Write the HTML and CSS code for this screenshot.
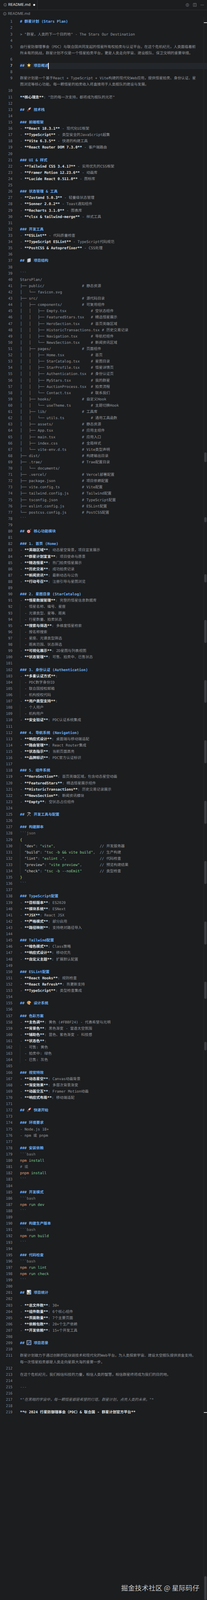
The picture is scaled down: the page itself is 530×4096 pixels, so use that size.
FILE: index.html
```html
<!DOCTYPE html>
<html lang="zh">
<head>
<meta charset="utf-8">
<title>README.md</title>
<link rel="stylesheet" href="styles.css">
</head>
<body>
<div class="window">
<header class="tabs">
  <div class="tab">
    <svg class="info" viewBox="0 0 12 12"><circle cx="6" cy="6" r="5"/><path d="M6 5.2v3.6M6 3.2v1"/></svg>
    <span class="tab-name">README.md</span>
    <span class="dirty"></span>
  </div>
  <div class="actions">
    <svg class="action" viewBox="0 0 14 14"><circle cx="7" cy="7" r="5.4"/><circle class="fill" cx="7" cy="7" r="1.5"/><path d="M7 0.6v2M7 11.4v2"/></svg>
    <svg class="action" viewBox="0 0 14 14"><rect x="1.5" y="1" width="11" height="12"/><path d="M7 1v12"/></svg>
    <svg class="action" viewBox="0 0 14 14"><circle class="fill" cx="2.5" cy="7" r="1.1"/><circle class="fill" cx="7" cy="7" r="1.1"/><circle class="fill" cx="11.5" cy="7" r="1.1"/></svg>
  </div>
</header>
<nav class="crumb">
  <svg class="info" viewBox="0 0 12 12"><circle cx="6" cy="6" r="5"/><path d="M6 5.2v3.6M6 3.2v1"/></svg>
  <span>README.md</span>
</nav>
<main class="editor">
<div class="row"><span class="num">1</span><span class="code h"># 群星计划 (Stars Plan)</span></div>
<div class="row"><span class="num">2</span><span class="code"></span></div>
<div class="row"><span class="num">3</span><span class="code">&gt; "群星，人类的下一个目的地" - The Stars Our Destination</span></div>
<div class="row"><span class="num">4</span><span class="code"></span></div>
<div class="row"><span class="num">5</span><span class="code">由行星防御理事会（PDC）与联合国共同发起的恒星所有权拍卖与认证平台。在这个危机纪元，人类面临着前<br>所未有的挑战，群星计划不仅是一个恒星拍卖平台，更是人类走向宇宙、建设舰队、保卫文明的重要举措。</span></div>
<div class="row"><span class="num">6</span><span class="code"></span></div>
<div class="row active"><span class="num">7</span><span class="code h">## <svg class="emoji" viewBox="0 0 16 16"><path d="M8 .5l1.9 4.6 5 .4-3.8 3.2 1.2 4.9L8 11l-4.3 2.6 1.2-4.9L1.1 5.5l5-.4z" fill="#f5c33b"/><path d="M8 3l1 3.2 3 .2-2.4 1.9.8 3L8 9.7l-2.4 1.6.8-3L4 6.4l3-.2z" fill="#fde68a"/><path d="M6 13.5l2 2 2-2z" fill="#e8912c"/></svg> 项目概述<span class="caret"></span></span></div>
<div class="row"><span class="num">8</span><span class="code"></span></div>
<div class="row"><span class="num">9</span><span class="code">群星计划是一个基于React + TypeScript + Vite构建的现代化Web应用，提供恒星拍卖、身份认证、星<br>图浏览等核心功能。每一颗恒星的拍卖收入将直接用于人类舰队的建设与发展。</span></div>
<div class="row"><span class="num">10</span><span class="code"></span></div>
<div class="row"><span class="num">11</span><span class="code"><b>**核心理念**</b>: "您的每一次支持，都将成为舰队的光芒"</span></div>
<div class="row"><span class="num">12</span><span class="code"></span></div>
<div class="row"><span class="num">13</span><span class="code h">## <svg class="emoji" viewBox="0 0 16 16"><path d="M15 1c-4 .3-7 2.300-9 6.500l2.500 2.500C12.700 8 14.700 5 15 1z" fill="#dfe3ea"/><path d="M15 1c-1.600.1-3 .5-4.300 1.200l3.100 3.100C14.500 4 14.900 2.600 15 1z" fill="#d8403a"/><path d="M6 7.500L2.500 8 1.500 10l3-.4zM8.500 10l-.5 3.500-2 1 .4-3z" fill="#c23a35"/><path d="M4.500 10.500L1 15l4.500-3.500z" fill="#f0b429"/><path d="M3.500 11.500L2.400 13.600l2.100-1.100z" fill="#e0561f"/><circle cx="10.500" cy="5.500" r="1.300" fill="#5b8fc9"/></svg> 技术栈</span></div>
<div class="row"><span class="num">14</span><span class="code"></span></div>
<div class="row"><span class="num">15</span><span class="code h">### 前端框架</span></div>
<div class="row"><span class="num">16</span><span class="code"><span class="dash">-</span> <b>**React 18.3.1**</b> - 现代化UI框架</span></div>
<div class="row"><span class="num">17</span><span class="code"><span class="dash">-</span> <b>**TypeScript**</b> - 类型安全的JavaScript超集</span></div>
<div class="row"><span class="num">18</span><span class="code"><span class="dash">-</span> <b>**Vite 6.3.5**</b> - 快速的构建工具</span></div>
<div class="row"><span class="num">19</span><span class="code"><span class="dash">-</span> <b>**React Router DOM 7.3.0**</b> - 客户端路由</span></div>
<div class="row"><span class="num">20</span><span class="code"></span></div>
<div class="row"><span class="num">21</span><span class="code h">### UI &amp; 样式</span></div>
<div class="row"><span class="num">22</span><span class="code"><span class="dash">-</span> <b>**Tailwind CSS 3.4.17**</b> - 实用优先的CSS框架</span></div>
<div class="row"><span class="num">23</span><span class="code"><span class="dash">-</span> <b>**Framer Motion 12.23.6**</b> - 动画库</span></div>
<div class="row"><span class="num">24</span><span class="code"><span class="dash">-</span> <b>**Lucide React 0.511.0**</b> - 图标库</span></div>
<div class="row"><span class="num">25</span><span class="code"></span></div>
<div class="row"><span class="num">26</span><span class="code h">### 状态管理 &amp; 工具</span></div>
<div class="row"><span class="num">27</span><span class="code"><span class="dash">-</span> <b>**Zustand 5.0.3**</b> - 轻量级状态管理</span></div>
<div class="row"><span class="num">28</span><span class="code"><span class="dash">-</span> <b>**Sonner 2.0.2**</b> - Toast通知组件</span></div>
<div class="row"><span class="num">29</span><span class="code"><span class="dash">-</span> <b>**Recharts 3.1.0**</b> - 图表库</span></div>
<div class="row"><span class="num">30</span><span class="code"><span class="dash">-</span> <b>**clsx &amp; tailwind-merge**</b> - 样式工具</span></div>
<div class="row"><span class="num">31</span><span class="code"></span></div>
<div class="row"><span class="num">32</span><span class="code h">### 开发工具</span></div>
<div class="row"><span class="num">33</span><span class="code"><span class="dash">-</span> <b>**ESLint**</b> - 代码质量检查</span></div>
<div class="row"><span class="num">34</span><span class="code"><span class="dash">-</span> <b>**TypeScript ESLint**</b> - TypeScript代码规范</span></div>
<div class="row"><span class="num">35</span><span class="code"><span class="dash">-</span> <b>**PostCSS &amp; Autoprefixer**</b> - CSS处理</span></div>
<div class="row"><span class="num">36</span><span class="code"></span></div>
<div class="row"><span class="num">37</span><span class="code h">## <svg class="emoji" viewBox="0 0 16 16"><path d="M2 4.500l5-2.500 7-1v12l-5 2-7 .5z" fill="#8f949b"/><path d="M4 3.500l9.500-1.300V12.500L4 14z" fill="#c9ccd1"/></svg> 项目结构</span></div>
<div class="row"><span class="num">38</span><span class="code"></span></div>
<div class="row"><span class="num">39</span><span class="code fence">```</span></div>
<div class="row"><span class="num">40</span><span class="code">StarsPlan/</span></div>
<div class="row"><span class="num">41</span><span class="code">├── public/                 # 静态资源</span></div>
<div class="row"><span class="num">42</span><span class="code">│   └── favicon.svg</span></div>
<div class="row"><span class="num">43</span><span class="code">├── src/                    # 源代码目录</span></div>
<div class="row"><span class="num">44</span><span class="code">│   ├── components/         # 可复用组件</span></div>
<div class="row"><span class="num">45</span><span class="code">│   │   ├── Empty.tsx           # 空状态组件</span></div>
<div class="row"><span class="num">46</span><span class="code">│   │   ├── FeaturedStars.tsx   # 精选恒星展示</span></div>
<div class="row"><span class="num">47</span><span class="code">│   │   ├── HeroSection.tsx     # 首页英雄区域</span></div>
<div class="row"><span class="num">48</span><span class="code">│   │   ├── HistoricTransactions.tsx # 历史交易记录</span></div>
<div class="row"><span class="num">49</span><span class="code">│   │   ├── Navigation.tsx      # 导航栏组件</span></div>
<div class="row"><span class="num">50</span><span class="code">│   │   └── NewsSection.tsx     # 新闻资讯区域</span></div>
<div class="row"><span class="num">51</span><span class="code">│   ├── pages/              # 页面组件</span></div>
<div class="row"><span class="num">52</span><span class="code">│   │   ├── Home.tsx            # 首页</span></div>
<div class="row"><span class="num">53</span><span class="code">│   │   ├── StarCatalog.tsx     # 星图目录</span></div>
<div class="row"><span class="num">54</span><span class="code">│   │   ├── StarProfile.tsx     # 恒星详情页</span></div>
<div class="row"><span class="num">55</span><span class="code">│   │   ├── Authentication.tsx  # 身份认证页</span></div>
<div class="row"><span class="num">56</span><span class="code">│   │   ├── MyStars.tsx         # 我的群星</span></div>
<div class="row"><span class="num">57</span><span class="code">│   │   ├── AuctionProcess.tsx  # 拍卖流程</span></div>
<div class="row"><span class="num">58</span><span class="code">│   │   └── Contact.tsx         # 联系我们</span></div>
<div class="row"><span class="num">59</span><span class="code">│   ├── hooks/              # 自定义Hook</span></div>
<div class="row"><span class="num">60</span><span class="code">│   │   └── useTheme.ts         # 主题切换Hook</span></div>
<div class="row"><span class="num">61</span><span class="code">│   ├── lib/                # 工具库</span></div>
<div class="row"><span class="num">62</span><span class="code">│   │   └── utils.ts            # 通用工具函数</span></div>
<div class="row"><span class="num">63</span><span class="code">│   ├── assets/             # 静态资源</span></div>
<div class="row"><span class="num">64</span><span class="code">│   ├── App.tsx             # 应用主组件</span></div>
<div class="row"><span class="num">65</span><span class="code">│   ├── main.tsx            # 应用入口</span></div>
<div class="row"><span class="num">66</span><span class="code">│   ├── index.css           # 全局样式</span></div>
<div class="row"><span class="num">67</span><span class="code">│   └── vite-env.d.ts       # Vite类型声明</span></div>
<div class="row"><span class="num">68</span><span class="code">├── dist/                   # 构建输出目录</span></div>
<div class="row"><span class="num">69</span><span class="code">├── .trae/                  # Trae配置目录</span></div>
<div class="row"><span class="num">70</span><span class="code">│   └── documents/</span></div>
<div class="row"><span class="num">71</span><span class="code">├── .vercel/                # Vercel部署配置</span></div>
<div class="row"><span class="num">72</span><span class="code">├── package.json            # 项目依赖配置</span></div>
<div class="row"><span class="num">73</span><span class="code">├── vite.config.ts          # Vite配置</span></div>
<div class="row"><span class="num">74</span><span class="code">├── tailwind.config.js      # Tailwind配置</span></div>
<div class="row"><span class="num">75</span><span class="code">├── tsconfig.json           # TypeScript配置</span></div>
<div class="row"><span class="num">76</span><span class="code">├── eslint.config.js        # ESLint配置</span></div>
<div class="row"><span class="num">77</span><span class="code">└── postcss.config.js       # PostCSS配置</span></div>
<div class="row"><span class="num">78</span><span class="code fence">```</span></div>
<div class="row"><span class="num">79</span><span class="code"></span></div>
<div class="row"><span class="num">80</span><span class="code h">## <svg class="emoji" viewBox="0 0 16 16"><circle cx="7" cy="9.500" r="6" fill="#d8383a"/><circle cx="7" cy="9.500" r="4.200" fill="#f3ece6"/><circle cx="7" cy="9.500" r="2.700" fill="#d8383a"/><circle cx="7" cy="9.500" r="1.100" fill="#f3ece6"/><path d="M7 9.500L14 2.500" stroke="#7fa88c" stroke-width="1.200"/><path d="M12.500 2.500L15 .8l-.4 2.700-1.300.7z" fill="#6a9a7a"/></svg> 核心功能模块</span></div>
<div class="row"><span class="num">81</span><span class="code"></span></div>
<div class="row"><span class="num">82</span><span class="code h">### 1. 首页 (Home)</span></div>
<div class="row"><span class="num">83</span><span class="code"><span class="dash">-</span> <b>**英雄区域**</b>: 动态星空背景，项目宣言展示</span></div>
<div class="row"><span class="num">84</span><span class="code"><span class="dash">-</span> <b>**群星计划宣言**</b>: 项目使命与愿景</span></div>
<div class="row"><span class="num">85</span><span class="code"><span class="dash">-</span> <b>**精选恒星**</b>: 热门拍卖恒星展示</span></div>
<div class="row"><span class="num">86</span><span class="code"><span class="dash">-</span> <b>**历史交易**</b>: 成功拍卖记录</span></div>
<div class="row"><span class="num">87</span><span class="code"><span class="dash">-</span> <b>**新闻资讯**</b>: 最新动态与公告</span></div>
<div class="row"><span class="num">88</span><span class="code"><span class="dash">-</span> <b>**行动号召**</b>: 注册引导与星图浏览</span></div>
<div class="row"><span class="num">89</span><span class="code"></span></div>
<div class="row"><span class="num">90</span><span class="code h">### 2. 星图目录 (StarCatalog)</span></div>
<div class="row"><span class="num">91</span><span class="code"><span class="dash">-</span> <b>**恒星数据管理**</b>: 完整的恒星信息数据库</span></div>
<div class="row"><span class="num">92</span><span class="code guide">  <span class="dash">-</span> 恒星名称、编号、星座</span></div>
<div class="row"><span class="num">93</span><span class="code guide">  <span class="dash">-</span> 光谱类型、星等、距离</span></div>
<div class="row"><span class="num">94</span><span class="code guide">  <span class="dash">-</span> 行星数量、拍卖状态</span></div>
<div class="row"><span class="num">95</span><span class="code"><span class="dash">-</span> <b>**搜索与筛选**</b>: 多维度恒星检索</span></div>
<div class="row"><span class="num">96</span><span class="code guide">  <span class="dash">-</span> 按名称搜索</span></div>
<div class="row"><span class="num">97</span><span class="code guide">  <span class="dash">-</span> 星座、光谱类型筛选</span></div>
<div class="row"><span class="num">98</span><span class="code guide">  <span class="dash">-</span> 距离范围、状态筛选</span></div>
<div class="row"><span class="num">99</span><span class="code"><span class="dash">-</span> <b>**可视化展示**</b>: 2D星图与列表视图</span></div>
<div class="row"><span class="num">100</span><span class="code"><span class="dash">-</span> <b>**状态管理**</b>: 可售、拍卖中、已售状态</span></div>
<div class="row"><span class="num">101</span><span class="code"></span></div>
<div class="row"><span class="num">102</span><span class="code h">### 3. 身份认证 (Authentication)</span></div>
<div class="row"><span class="num">103</span><span class="code"><span class="dash">-</span> <b>**多重认证方式**</b>:</span></div>
<div class="row"><span class="num">104</span><span class="code guide">  <span class="dash">-</span> PDC数字身份ID</span></div>
<div class="row"><span class="num">105</span><span class="code guide">  <span class="dash">-</span> 联合国授权邮箱</span></div>
<div class="row"><span class="num">106</span><span class="code guide">  <span class="dash">-</span> 机构授权代码</span></div>
<div class="row"><span class="num">107</span><span class="code"><span class="dash">-</span> <b>**用户类型支持**</b>:</span></div>
<div class="row"><span class="num">108</span><span class="code guide">  <span class="dash">-</span> 个人用户</span></div>
<div class="row"><span class="num">109</span><span class="code guide">  <span class="dash">-</span> 机构用户</span></div>
<div class="row"><span class="num">110</span><span class="code"><span class="dash">-</span> <b>**安全验证**</b>: PDC认证系统集成</span></div>
<div class="row"><span class="num">111</span><span class="code"></span></div>
<div class="row"><span class="num">112</span><span class="code h">### 4. 导航系统 (Navigation)</span></div>
<div class="row"><span class="num">113</span><span class="code"><span class="dash">-</span> <b>**响应式设计**</b>: 桌面端与移动端适配</span></div>
<div class="row"><span class="num">114</span><span class="code"><span class="dash">-</span> <b>**路由管理**</b>: React Router集成</span></div>
<div class="row"><span class="num">115</span><span class="code"><span class="dash">-</span> <b>**状态指示**</b>: 当前页面高亮</span></div>
<div class="row"><span class="num">116</span><span class="code"><span class="dash">-</span> <b>**品牌标识**</b>: PDC官方认证标识</span></div>
<div class="row"><span class="num">117</span><span class="code"></span></div>
<div class="row"><span class="num">118</span><span class="code h">### 5. 组件系统</span></div>
<div class="row"><span class="num">119</span><span class="code"><span class="dash">-</span> <b>**HeroSection**</b>: 首页英雄区域，包含动态星空动画</span></div>
<div class="row"><span class="num">120</span><span class="code"><span class="dash">-</span> <b>**FeaturedStars**</b>: 精选恒星展示组件</span></div>
<div class="row"><span class="num">121</span><span class="code"><span class="dash">-</span> <b>**HistoricTransactions**</b>: 历史交易记录展示</span></div>
<div class="row"><span class="num">122</span><span class="code"><span class="dash">-</span> <b>**NewsSection**</b>: 新闻资讯模块</span></div>
<div class="row"><span class="num">123</span><span class="code"><span class="dash">-</span> <b>**Empty**</b>: 空状态占位组件</span></div>
<div class="row"><span class="num">124</span><span class="code"></span></div>
<div class="row"><span class="num">125</span><span class="code h">## <svg class="emoji" viewBox="0 0 16 16"><path d="M11.500 3L2.500 15" stroke="#9a9da3" stroke-width="1.600"/><path d="M4.500 3L13.500 15" stroke="#8a6f4e" stroke-width="1.600"/><path d="M1.500 4.500C4 1.500 8 1 11 2.500L9.500 4C7 3 4 3.500 1.500 4.500z" fill="#b9bcc2"/><path d="M9.500 1.500l5 3-1.500 2.500-5-3z" fill="#aeb1b7"/></svg> 开发工具与配置</span></div>
<div class="row"><span class="num">126</span><span class="code"></span></div>
<div class="row"><span class="num">127</span><span class="code h">### 构建脚本</span></div>
<div class="row"><span class="num">128</span><span class="code fence">```json</span></div>
<div class="row"><span class="num">129</span><span class="code"><span class="brace">{</span></span></div>
<div class="row"><span class="num">130</span><span class="code guide">  <span class="key">"dev"</span>: <span class="str">"vite"</span>,                    // 开发服务器</span></div>
<div class="row"><span class="num">131</span><span class="code guide">  <span class="key">"build"</span>: <span class="str">"tsc -b &amp;&amp; vite build"</span>,  // 生产构建</span></div>
<div class="row"><span class="num">132</span><span class="code guide">  <span class="key">"lint"</span>: <span class="str">"eslint ."</span>,               // 代码检查</span></div>
<div class="row"><span class="num">133</span><span class="code guide">  <span class="key">"preview"</span>: <span class="str">"vite preview"</span>,        // 预览构建结果</span></div>
<div class="row"><span class="num">134</span><span class="code guide">  <span class="key">"check"</span>: <span class="str">"tsc -b --noEmit"</span>        // 类型检查</span></div>
<div class="row"><span class="num">135</span><span class="code"><span class="brace">}</span></span></div>
<div class="row"><span class="num">136</span><span class="code fence">```</span></div>
<div class="row"><span class="num">137</span><span class="code"></span></div>
<div class="row"><span class="num">138</span><span class="code h">### TypeScript配置</span></div>
<div class="row"><span class="num">139</span><span class="code"><span class="dash">-</span> <b>**目标版本**</b>: ES2020</span></div>
<div class="row"><span class="num">140</span><span class="code"><span class="dash">-</span> <b>**模块系统**</b>: ESNext</span></div>
<div class="row"><span class="num">141</span><span class="code"><span class="dash">-</span> <b>**JSX**</b>: React JSX</span></div>
<div class="row"><span class="num">142</span><span class="code"><span class="dash">-</span> <b>**严格模式**</b>: 部分启用</span></div>
<div class="row"><span class="num">143</span><span class="code"><span class="dash">-</span> <b>**路径映射**</b>: 支持绝对路径导入</span></div>
<div class="row"><span class="num">144</span><span class="code"></span></div>
<div class="row"><span class="num">145</span><span class="code h">### Tailwind配置</span></div>
<div class="row"><span class="num">146</span><span class="code"><span class="dash">-</span> <b>**暗色模式**</b>: Class策略</span></div>
<div class="row"><span class="num">147</span><span class="code"><span class="dash">-</span> <b>**响应式设计**</b>: 移动优先</span></div>
<div class="row"><span class="num">148</span><span class="code"><span class="dash">-</span> <b>**自定义主题**</b>: 扩展默认配置</span></div>
<div class="row"><span class="num">149</span><span class="code"></span></div>
<div class="row"><span class="num">150</span><span class="code h">### ESLint配置</span></div>
<div class="row"><span class="num">151</span><span class="code"><span class="dash">-</span> <b>**React Hooks**</b>: 规则检查</span></div>
<div class="row"><span class="num">152</span><span class="code"><span class="dash">-</span> <b>**React Refresh**</b>: 热更新支持</span></div>
<div class="row"><span class="num">153</span><span class="code"><span class="dash">-</span> <b>**TypeScript**</b>: 类型检查集成</span></div>
<div class="row"><span class="num">154</span><span class="code"></span></div>
<div class="row"><span class="num">155</span><span class="code h">## <svg class="emoji" viewBox="0 0 16 16"><path d="M8 1.500C3.500 1.500 1 4.500 1.500 8c.5 3 3.500 6.500 8 6.500 2.500 0 3-2 2-3.500-.8-1.300.4-2.500 2-2.300 1.500.1 1.800-1.500 1-3C13.500 3.300 11 1.500 8 1.500z" fill="#e0a458"/><circle cx="5" cy="5" r="1.300" fill="#d8403a"/><circle cx="9" cy="4" r="1.300" fill="#f0d040"/><circle cx="4" cy="9" r="1.300" fill="#4f9a55"/><circle cx="7" cy="12" r="1.300" fill="#4f80c9"/></svg> 设计系统</span></div>
<div class="row"><span class="num">156</span><span class="code"></span></div>
<div class="row"><span class="num">157</span><span class="code h">### 色彩方案</span></div>
<div class="row"><span class="num">158</span><span class="code"><span class="dash">-</span> <b>**主色调**</b>: 黄色 (#FBBF24) - 代表希望与光明</span></div>
<div class="row"><span class="num">159</span><span class="code"><span class="dash">-</span> <b>**背景色**</b>: 黑色渐变 - 营造太空氛围</span></div>
<div class="row"><span class="num">160</span><span class="code"><span class="dash">-</span> <b>**辅助色**</b>: 蓝色、紫色渐变 - 科技感</span></div>
<div class="row"><span class="num">161</span><span class="code"><span class="dash">-</span> <b>**状态色**</b>:</span></div>
<div class="row"><span class="num">162</span><span class="code guide">  <span class="dash">-</span> 可售: 黄色</span></div>
<div class="row"><span class="num">163</span><span class="code guide">  <span class="dash">-</span> 拍卖中: 绿色</span></div>
<div class="row"><span class="num">164</span><span class="code guide">  <span class="dash">-</span> 已售: 灰色</span></div>
<div class="row"><span class="num">165</span><span class="code"></span></div>
<div class="row"><span class="num">166</span><span class="code h">### 视觉特效</span></div>
<div class="row"><span class="num">167</span><span class="code"><span class="dash">-</span> <b>**动态星空**</b>: Canvas动画背景</span></div>
<div class="row"><span class="num">168</span><span class="code"><span class="dash">-</span> <b>**渐变效果**</b>: 多层次背景渐变</span></div>
<div class="row"><span class="num">169</span><span class="code"><span class="dash">-</span> <b>**动画交互**</b>: Framer Motion动画</span></div>
<div class="row"><span class="num">170</span><span class="code"><span class="dash">-</span> <b>**响应式布局**</b>: 移动端适配</span></div>
<div class="row"><span class="num">171</span><span class="code"></span></div>
<div class="row"><span class="num">172</span><span class="code h">## <svg class="emoji" viewBox="0 0 16 16"><path d="M15 1c-4 .3-7 2.300-9 6.500l2.500 2.500C12.700 8 14.700 5 15 1z" fill="#dfe3ea"/><path d="M15 1c-1.600.1-3 .5-4.300 1.200l3.100 3.100C14.500 4 14.900 2.600 15 1z" fill="#d8403a"/><path d="M6 7.500L2.500 8 1.500 10l3-.4zM8.500 10l-.5 3.500-2 1 .4-3z" fill="#c23a35"/><path d="M4.500 10.500L1 15l4.500-3.500z" fill="#f0b429"/><path d="M3.500 11.500L2.400 13.600l2.100-1.100z" fill="#e0561f"/><circle cx="10.500" cy="5.500" r="1.300" fill="#5b8fc9"/></svg> 快速开始</span></div>
<div class="row"><span class="num">173</span><span class="code"></span></div>
<div class="row"><span class="num">174</span><span class="code h">### 环境要求</span></div>
<div class="row"><span class="num">175</span><span class="code"><span class="dash">-</span> Node.js 18+</span></div>
<div class="row"><span class="num">176</span><span class="code"><span class="dash">-</span> npm 或 pnpm</span></div>
<div class="row"><span class="num">177</span><span class="code"></span></div>
<div class="row"><span class="num">178</span><span class="code h">### 安装依赖</span></div>
<div class="row"><span class="num">179</span><span class="code fence">```bash</span></div>
<div class="row"><span class="num">180</span><span class="code"><span class="cmd">npm</span> <span class="str">install</span></span></div>
<div class="row"><span class="num">181</span><span class="code fence"># 或</span></div>
<div class="row"><span class="num">182</span><span class="code"><span class="cmd">pnpm</span> <span class="str">install</span></span></div>
<div class="row"><span class="num">183</span><span class="code fence">```</span></div>
<div class="row"><span class="num">184</span><span class="code"></span></div>
<div class="row"><span class="num">185</span><span class="code h">### 开发模式</span></div>
<div class="row"><span class="num">186</span><span class="code fence">```bash</span></div>
<div class="row"><span class="num">187</span><span class="code"><span class="cmd">npm</span> <span class="str">run dev</span></span></div>
<div class="row"><span class="num">188</span><span class="code fence">```</span></div>
<div class="row"><span class="num">189</span><span class="code"></span></div>
<div class="row"><span class="num">190</span><span class="code h">### 构建生产版本</span></div>
<div class="row"><span class="num">191</span><span class="code fence">```bash</span></div>
<div class="row"><span class="num">192</span><span class="code"><span class="cmd">npm</span> <span class="str">run build</span></span></div>
<div class="row"><span class="num">193</span><span class="code fence">```</span></div>
<div class="row"><span class="num">194</span><span class="code"></span></div>
<div class="row"><span class="num">195</span><span class="code h">### 代码检查</span></div>
<div class="row"><span class="num">196</span><span class="code fence">```bash</span></div>
<div class="row"><span class="num">197</span><span class="code"><span class="cmd">npm</span> <span class="str">run lint</span></span></div>
<div class="row"><span class="num">198</span><span class="code"><span class="cmd">npm</span> <span class="str">run check</span></span></div>
<div class="row"><span class="num">199</span><span class="code fence">```</span></div>
<div class="row"><span class="num">200</span><span class="code"></span></div>
<div class="row"><span class="num">201</span><span class="code h">## <svg class="emoji" viewBox="0 0 16 16"><rect x="1" y="0.500" width="14" height="15" fill="#eef0f2"/><rect x="3" y="7" width="2.600" height="8" fill="#3fa34d"/><rect x="6.700" y="10" width="2.600" height="5" fill="#d8352f"/><rect x="10.400" y="3" width="2.600" height="12" fill="#2f6fc4"/></svg> 项目统计</span></div>
<div class="row"><span class="num">202</span><span class="code"></span></div>
<div class="row"><span class="num">203</span><span class="code"><span class="dash">-</span> <b>**总文件数**</b>: 30+</span></div>
<div class="row"><span class="num">204</span><span class="code"><span class="dash">-</span> <b>**组件数量**</b>: 6个核心组件</span></div>
<div class="row"><span class="num">205</span><span class="code"><span class="dash">-</span> <b>**页面数量**</b>: 7个主要页面</span></div>
<div class="row"><span class="num">206</span><span class="code"><span class="dash">-</span> <b>**依赖包数**</b>: 20+个生产依赖</span></div>
<div class="row"><span class="num">207</span><span class="code"><span class="dash">-</span> <b>**开发依赖**</b>: 15+个开发工具</span></div>
<div class="row"><span class="num">208</span><span class="code"></span></div>
<div class="row"><span class="num">209</span><span class="code h">## <svg class="emoji" viewBox="0 0 16 16"><rect x="1" y="1" width="14" height="14" fill="#1d3a63" stroke="#d5d8dc" stroke-width="1.400"/><path d="M2.500 13.500L12 3.500l1.500 1.500L5 13.500z" fill="#5f86bf"/></svg> 项目愿景</span></div>
<div class="row"><span class="num">210</span><span class="code"></span></div>
<div class="row"><span class="num">211</span><span class="code">群星计划致力于通过创新的区块链技术和现代化的Web平台，为人类探索宇宙、建设太空舰队提供资金支持。<br>每一次恒星拍卖都是人类走向星辰大海的重要一步。</span></div>
<div class="row"><span class="num">212</span><span class="code"></span></div>
<div class="row"><span class="num">213</span><span class="code">在这个危机纪元，我们相信科技的力量，相信人类的智慧，相信群星终将成为我们的目的地。</span></div>
<div class="row"><span class="num">214</span><span class="code"></span></div>
<div class="row"><span class="num">215</span><span class="code fence">---</span></div>
<div class="row"><span class="num">216</span><span class="code"></span></div>
<div class="row"><span class="num">217</span><span class="code"><em>*"在黑暗的宇宙中，每一颗恒星都是希望的灯塔。群星计划，点亮人类的未来。"*</em></span></div>
<div class="row"><span class="num">218</span><span class="code"></span></div>
<div class="row"><span class="num">219</span><span class="code"><b>**© 2024 行星防御理事会（PDC）&amp; 联合国 - 群星计划官方平台**</b></span></div>
</main>
<aside class="rail">
  <span class="marker marker-top"></span>
  <span class="marker marker-end"></span>
  <span class="thumb t1"></span><span class="thumb t2"></span><span class="thumb t3"></span><span class="thumb t4"></span>
  <span class="thumb t5"></span><span class="thumb t6"></span><span class="thumb t7"></span><span class="thumb t8"></span>
  <span class="thumb t9"></span><span class="thumb t10"></span><span class="thumb t11"></span><span class="thumb t12"></span>
</aside>
<div class="watermark">掘金技术社区 @ 星际码仔</div>
</div>
</body>
</html>
```

FILE: styles.css
```css
* { box-sizing: border-box; }

html, body {
  margin: 0;
  padding: 0;
  background: #1b1d1f;
}

.window {
  position: relative;
  width: 530px;
  height: 4096px;
  overflow: hidden;
  background: #1b1d1f;
  text-rendering: geometricPrecision;
}

/* Tab bar */
.tabs {
  display: flex;
  justify-content: space-between;
  height: 26.4px;
  border-bottom: 1px solid #2d2f32;
  font-family: "Inter", "Liberation Sans", sans-serif;
}

.tab {
  display: flex;
  align-items: center;
  gap: 3.6px;
  width: 96px;
  padding-left: 8.9px;
  border-right: 1px solid #2d2f32;
  color: #e4e6e9;
  font-size: 9.6px;
}

.tab-name {
  flex: none;
}

.dirty {
  width: 5.6px;
  height: 5.6px;
  margin-left: 3px;
  border-radius: 50%;
  background: #e8eaed;
}

.info {
  flex: none;
  width: 8.6px;
  height: 8.6px;
  fill: none;
  stroke: #a9acb1;
  stroke-width: 1;
}

.actions {
  display: flex;
  align-items: center;
  gap: 9.6px;
  padding-right: 7.4px;
}

.action {
  width: 9.6px;
  height: 9.6px;
  fill: none;
  stroke: #9a9da2;
  stroke-width: 1;
}

.action .fill {
  fill: #9a9da2;
  stroke: none;
}

/* Breadcrumb */
.crumb {
  display: flex;
  align-items: center;
  gap: 3.4px;
  height: 21.9px;
  padding: 0 0 3.4px 8.2px;
  color: #8d9095;
  font-family: "Inter", "Liberation Sans", sans-serif;
  font-size: 9.6px;
}

/* Editor rows */
.editor {
  font-family: "DejaVu Sans Mono", "Noto Sans CJK SC", monospace;
  font-size: 9.42px;
  line-height: 16.104px;
  color: #94979c;
}

.row {
  display: flex;
  min-height: 16.104px;
}

.num {
  flex: none;
  width: 32px;
  margin-right: 19.3px;
  text-align: right;
  color: #85888d;
}

.code {
  flex: 1;
  white-space: pre;
}

.active .num {
  color: #e6e8ea;
}

.active .code {
  background: #23262a;
}

.caret {
  display: inline-block;
  width: 1.5px;
  height: 16.1px;
  margin-left: -0.5px;
  vertical-align: top;
  background: #f0f1f3;
}

.h {
  color: #6aaef5;
  font-weight: 700;
}

.code b {
  color: #dfe1e4;
  font-weight: 700;
}

.code em {
  color: #86898e;
  font-style: italic;
}

.dash {
  color: #e06c75;
}

.fence {
  color: #7d8085;
}

.guide {
  box-shadow: inset 1px 0 0 #2c2e31;
}

.key {
  color: #c6c9cd;
}

.str {
  color: #7fc98f;
}

.brace {
  color: #f0d43a;
}

.cmd {
  color: #e09a72;
}

.emoji {
  display: inline-block;
  width: 12.2px;
  height: 12.2px;
  vertical-align: -2.2px;
}

/* Scroll rail overlay */
.rail {
  position: absolute;
  top: 43.5px;
  right: 0;
  bottom: 0;
  width: 9.3px;
  border-left: 1px solid #26282b;
}

.marker {
  position: absolute;
  left: 0;
  right: 0;
  height: 1.5px;
  background: #c9cbce;
}

.marker-top { top: 13.5px; }
.marker-end { top: 3571.5px; }

.thumb {
  position: absolute;
  left: 1.6px;
  width: 6px;
  border-radius: 3px;
  background: #3a3c40;
}

.t1 { top: 1114.3px; height: 25.1px; }
.t2 { top: 1280.7px; height: 13.2px; }
.t3 { top: 1426.4px; height: 21.2px; }
.t4 { top: 1543.5px; height: 58.5px; }
.t5 { top: 1697.2px; height: 58.6px; }
.t6 { top: 1851.6px; height: 59.3px; }
.t7 { top: 2006.1px; height: 59.3px; }
.t8 { top: 2160.5px; height: 59.3px; }
.t9 { top: 2315px; height: 59.3px; }
.t10 { top: 2469.4px; height: 44px; }
.t11 { top: 2623.2px; height: 21.9px; }
.t12 { top: 3991.3px; height: 61.2px; }

/* Watermark overlay */
.watermark {
  position: absolute;
  right: 19.5px;
  bottom: 18.5px;
  color: #cfcfcf;
  font-family: "Noto Sans CJK SC", sans-serif;
  font-size: 17.6px;
  line-height: 25px;
  white-space: pre;
  text-shadow: 0 1px 1px #000;
}
```
